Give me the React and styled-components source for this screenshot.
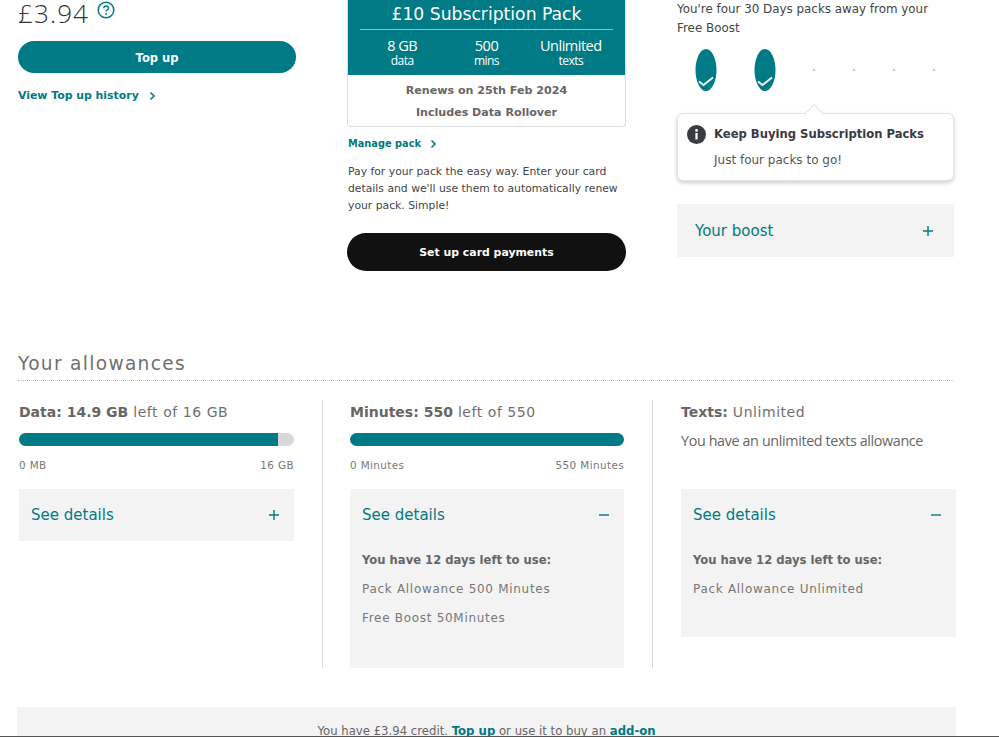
import React from "react";
import styled, { createGlobalStyle } from "styled-components";

const teal = "#007a84";
const Global = createGlobalStyle`
  html, body { margin: 0; padding: 0; background: #fff; }
  body { font-family: "DejaVu Sans", "Noto Sans", sans-serif; color: #555; }
  * { box-sizing: border-box; }
`;
const Page = styled.div`
  position: relative; width: 999px; height: 737px; overflow: hidden; background: #fff;
  border-bottom: 1px solid #555;
`;
const Top = styled.div`
  display: grid; grid-template-columns: 278px 279px 277px; column-gap: 51px; padding-left: 18px; height: 349px;
`;
const Col = styled.div`display: flex; flex-direction: column; align-items: stretch;`;
const BalanceRow = styled.div`display: flex; align-items: flex-start; height: 41px; gap: 8px;`;
const Balance = styled.div`
  font-family: "Open Sans", sans-serif; font-weight: 300; font-size: 26px; line-height: 27px; letter-spacing: 1.1px; color: #333;
`;
const Pill = styled.div`
  display: flex; align-items: center; justify-content: center; color: #fff; font-weight: 700; padding-top: 1px;
  font-size: ${p => p.$size}px; height: ${p => p.$h}px; border-radius: 19px; background: ${p => p.$bg};
`;
const HistoryLink = styled.div`
  display: flex; align-items: center; gap: 10px; margin-top: 16px; color: ${teal}; font-weight: 700; font-size: 10.9px; line-height: 14px;
`;
const PackCard = styled.div`border: 1px solid #ddd; border-top: 0; border-radius: 0 0 4px 4px; height: 127px; overflow: hidden;`;
const PackHead = styled.div`background: ${teal}; color: #fff; height: 75px; margin: 0 -1px; padding: 0 13px; text-align: center;`;
const PackTitle = styled.div`
  font-size: 17.2px; height: 30px; line-height: 29px; border-bottom: 1px solid #8fc3c8; white-space: nowrap;
`;
const Stats = styled.div`display: grid; grid-template-columns: 1fr 1fr 1fr; padding-top: 8px;`;
const Stat = styled.div`
  font-size: 14.5px; line-height: 16px; letter-spacing: -0.5px; font-family: "Open Sans", sans-serif; white-space: nowrap;
  small { display: block; font-size: 12px; line-height: 13px; }
`;
const PackBody = styled.div`
  text-align: center; font-weight: 700; font-size: 11.1px; line-height: 22px; color: #666; padding-top: 5px;
`;
const Manage = styled.div`
  display: flex; align-items: center; gap: 9px; margin-top: 10px; margin-left: 1px; color: ${teal}; font-size: 9.8px; font-weight: 700; line-height: 14px;
`;
const Para = styled.p`margin: 12px 0 19px 1px; font-size: 10.8px; line-height: 17px; color: #444; white-space: nowrap;`;
const Intro = styled.div`font-size: 11.9px; line-height: 19px; color: #444; white-space: nowrap;`;
const Steps = styled.div`display: flex; height: 42px; margin-top: 11px;`;
const DotMark = styled.span`width: 2px; height: 2px; border-radius: 50%; background: #bbb; margin-top: 20px; margin-left: ${p => p.$ml}px;`;
const Tip = styled.div`
  position: relative; margin-top: 22px; height: 68px; border: 1px solid #e2e2e2; border-radius: 6px; background: #fff;
  box-shadow: 0 2px 4px rgba(0,0,0,.2); padding: 10px 9px;
  &::before { content: ""; position: absolute; left: 129px; top: -7px; width: 13px; height: 13px; background: #fff;
    border-left: 1px solid #e2e2e2; border-top: 1px solid #e2e2e2; transform: rotate(45deg); }
`;
const TipHead = styled.div`display: flex; align-items: center; gap: 8px; font-weight: 700; font-size: 11.6px; color: #3a3a42; line-height: 20px;`;
const TipBody = styled.div`margin: 7px 0 0 27px; font-size: 12px; line-height: 18px; color: #555;`;
const Accordion = styled.div`
  background: #f3f3f3; padding: 0 12px; height: ${p => p.$h}px; margin-top: ${p => p.$mt || 0}px; color: #666;
`;
const AccHead = styled.div`
  display: flex; align-items: center; justify-content: space-between; height: ${p => p.$h || 52}px; color: ${teal}; font-size: 15px;
  padding-right: ${p => p.$pr || 0}px; padding-left: ${p => p.$pl || 0}px;
`;
const Heading = styled.div`
  margin-left: 18px; width: 936px; height: 32px; border-bottom: 1px dotted #bbb; font-size: 18.6px; line-height: 29px; color: #707070; letter-spacing: 1.3px;
`;
const Allowances = styled.div`
  display: grid; grid-template-columns: 303px 330px 304px; margin-left: 19px; margin-top: 19px; height: 268px;
`;
const Allow = styled.div`
  padding-right: ${p => p.$pr}px; padding-left: ${p => p.$pl}px; border-left: ${p => p.$line ? "1px solid #d8d8d8" : "0"};
`;
const AllowTitle = styled.div`
  font-size: 14px; line-height: 24px; color: #707070; letter-spacing: 0.55px; white-space: nowrap;
  b { font-weight: 700; letter-spacing: 0; color: #666; }
`;
const Bar = styled.div`height: 13px; border-radius: 7px; background: #d9d9d9; overflow: hidden; margin-top: 9px;`;
const Fill = styled.div`height: 100%; background: ${teal};`;
const Scale = styled.div`display: flex; justify-content: space-between; margin: 11px 0 16px; font-size: 10.4px; line-height: 16px; letter-spacing: 0.4px; color: #777; white-space: nowrap;`;
const Unlimited = styled.div`font-family: "Open Sans", sans-serif; font-size: 14.3px; line-height: 20px; color: #666; letter-spacing: -0.35px; margin: 7px 0 38px; white-space: nowrap;`;
const DetailHead = styled.div`font-weight: 700; font-size: 11.6px; line-height: 20px; margin-top: 9px; color: #666;`;
const DetailRow = styled.div`font-size: 12px; line-height: 20px; margin-top: 9px; color: #777; white-space: nowrap; letter-spacing: 0.7px;`;
const Footer = styled.div`
  margin: 39px 0 0 17px; width: 939px; height: 30px; background: #f3f3f3; text-align: center; font-size: 11.7px; line-height: 16px; padding-top: 16px; color: #666; white-space: nowrap;
  b { color: ${teal}; }
`;

const Chevron = () => (
  <svg width="7" height="10" viewBox="0 0 7 10"><path d="M1.5 1.5 5 5 1.5 8.5" fill="none" stroke={teal} strokeWidth="1.6" /></svg>
);
const Plus = () => (
  <svg width="12" height="12" viewBox="0 0 12 12"><path d="M6 1v10M1 6h10" stroke={teal} strokeWidth="1.4" /></svg>
);
const Minus = () => (
  <svg width="12" height="12" viewBox="0 0 12 12"><path d="M1 6h10" stroke={teal} strokeWidth="1.4" /></svg>
);
const Help = () => (
  <svg width="18" height="18" viewBox="0 0 18 18" style={{ marginTop: 1 }}>
    <circle cx="9" cy="9" r="7.8" fill="none" stroke={teal} strokeWidth="1.5" />
    <path d="M6.8 7.2c0-3 4.6-3 4.6 0 0 1.8-2.3 1.7-2.3 3.4" fill="none" stroke={teal} strokeWidth="1.4" />
    <circle cx="9.1" cy="13" r=".9" fill={teal} />
  </svg>
);
const Info = () => (
  <svg width="19" height="19" viewBox="0 0 19 19">
    <circle cx="9.5" cy="9.5" r="9.5" fill="#3a3a42" />
    <rect x="8.4" y="8" width="2.2" height="6.5" fill="#fff" />
    <circle cx="9.5" cy="5.4" r="1.4" fill="#fff" />
  </svg>
);
const Done = ({ ml }) => (
  <svg width="22" height="42" viewBox="0 0 22 42" style={{ marginLeft: ml }}>
    <ellipse cx="11" cy="21" rx="10.5" ry="21" fill={teal} />
    <path d="M4 32.5l4.5 3.5L18 28.5" fill="none" stroke="#fff" strokeWidth="1.8" />
  </svg>
);

export default function App() {
  return (
    <Page>
      <Global />
      <Top>
        <Col>
          <BalanceRow><Balance>£3.94</Balance><Help /></BalanceRow>
          <Pill $bg={teal} $h={32} $size={11.5}>Top up</Pill>
          <HistoryLink>View Top up history <Chevron /></HistoryLink>
        </Col>
        <Col>
          <PackCard>
            <PackHead>
              <PackTitle>£10 Subscription Pack</PackTitle>
              <Stats>
                <Stat>8 GB<small>data</small></Stat>
                <Stat>500<small>mins</small></Stat>
                <Stat>Unlimited<small>texts</small></Stat>
              </Stats>
            </PackHead>
            <PackBody>Renews on 25th Feb 2024<br />Includes Data Rollover</PackBody>
          </PackCard>
          <Manage>Manage pack <Chevron /></Manage>
          <Para>Pay for your pack the easy way. Enter your card<br />details and we'll use them to automatically renew<br />your pack. Simple!</Para>
          <Pill $bg="#111" $h={38} $size={10.9}>Set up card payments</Pill>
        </Col>
        <Col>
          <Intro>You're four 30 Days packs away from your<br />Free Boost</Intro>
          <Steps>
            <Done ml={18} />
            <Done ml={37} />
            <DotMark $ml={37} />
            <DotMark $ml={38} />
            <DotMark $ml={38} />
            <DotMark $ml={38} />
          </Steps>
          <Tip>
            <TipHead><Info />Keep Buying Subscription Packs</TipHead>
            <TipBody>Just four packs to go!</TipBody>
          </Tip>
          <Accordion $h={53} $mt={23}>
            <AccHead $h={53} $pl={6} $pr={8}>Your boost <Plus /></AccHead>
          </Accordion>
        </Col>
      </Top>
      <Heading>Your allowances</Heading>
      <Allowances>
        <Allow $pr={28} $pl={0}>
          <AllowTitle><b>Data: 14.9 GB</b> left of 16 GB</AllowTitle>
          <Bar><Fill style={{ width: "94%" }} /></Bar>
          <Scale><span>0 MB</span><span>16 GB</span></Scale>
          <Accordion $h={52}>
            <AccHead $pr={2}>See details <Plus /></AccHead>
          </Accordion>
        </Allow>
        <Allow $line $pr={28} $pl={27}>
          <AllowTitle><b>Minutes: 550</b> left of 550</AllowTitle>
          <Bar><Fill style={{ width: "100%" }} /></Bar>
          <Scale><span>0 Minutes</span><span>550 Minutes</span></Scale>
          <Accordion $h={179}>
            <AccHead $pr={2}>See details <Minus /></AccHead>
            <DetailHead>You have 12 days left to use:</DetailHead>
            <DetailRow>Pack Allowance 500 Minutes</DetailRow>
            <DetailRow>Free Boost 50Minutes</DetailRow>
          </Accordion>
        </Allow>
        <Allow $line $pr={0} $pl={28}>
          <AllowTitle><b>Texts:</b> Unlimited</AllowTitle>
          <Unlimited>You have an unlimited texts allowance</Unlimited>
          <Accordion $h={148}>
            <AccHead $pr={2}>See details <Minus /></AccHead>
            <DetailHead>You have 12 days left to use:</DetailHead>
            <DetailRow>Pack Allowance Unlimited</DetailRow>
          </Accordion>
        </Allow>
      </Allowances>
      <Footer>You have £3.94 credit. <b>Top up</b> or use it to buy an <b>add-on</b></Footer>
    </Page>
  );
}
